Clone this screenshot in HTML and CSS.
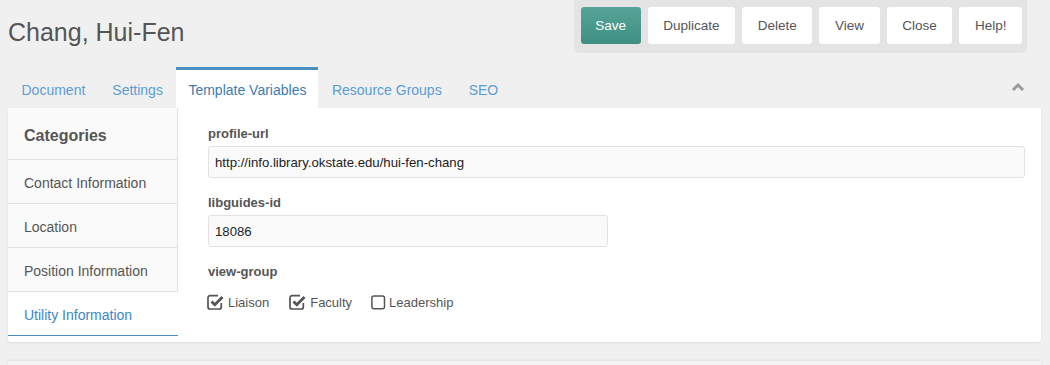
FILE: index.html
```html
<!DOCTYPE html>
<html lang="en">
<head>
  <meta charset="UTF-8">
  <title>Chang, Hui-Fen</title>
  <link rel="stylesheet" href="styles.css">
</head>
<body>
<div class="header">
  <h1 class="page-title">Chang, Hui-Fen</h1>
  <div class="action-bar">
    <button class="btn btn-primary">Save</button>
    <button class="btn">Duplicate</button>
    <button class="btn">Delete</button>
    <button class="btn">View</button>
    <button class="btn">Close</button>
    <button class="btn">Help!</button>
  </div>
</div>

<div class="tabs">
  <div class="tab">Document</div>
  <div class="tab">Settings</div>
  <div class="tab active">Template Variables</div>
  <div class="tab">Resource Groups</div>
  <div class="tab">SEO</div>
  <div class="tab-toggle">
    <svg width="14" height="10" viewBox="0 0 14 10"><polyline points="2,8 7,3 12,8" fill="none" stroke="#999" stroke-width="3"/></svg>
  </div>
</div>

<div class="panel">
  <div class="categories">
    <div class="cat-head">Categories</div>
    <div class="cat">Contact Information</div>
    <div class="cat">Location</div>
    <div class="cat">Position Information</div>
    <div class="cat active">Utility Information</div>
  </div>

  <div class="fields">
    <div class="field">
      <label class="field-label">profile-url</label>
      <div class="input">http://info.library.okstate.edu/hui-fen-chang</div>
    </div>
    <div class="field">
      <label class="field-label">libguides-id</label>
      <div class="input input-short">18086</div>
    </div>
    <div class="field">
      <label class="field-label">view-group</label>
      <div class="checks">
        <span class="check">
          <svg width="19" height="17" viewBox="0 0 19 17"><path d="M15.3 9v4a2 2 0 0 1-2 2h-9.3a2 2 0 0 1-2-2v-9.3a2 2 0 0 1 2-2h8" fill="none" stroke="#555" stroke-width="1.7"/><polyline points="5.5,7.5 8.8,10.8 16.5,3" fill="none" stroke="#555" stroke-width="2.8"/></svg>
          Liaison
        </span>
        <span class="check">
          <svg width="19" height="17" viewBox="0 0 19 17"><path d="M15.3 9v4a2 2 0 0 1-2 2h-9.3a2 2 0 0 1-2-2v-9.3a2 2 0 0 1 2-2h8" fill="none" stroke="#555" stroke-width="1.7"/><polyline points="5.5,7.5 8.8,10.8 16.5,3" fill="none" stroke="#555" stroke-width="2.8"/></svg>
          Faculty
        </span>
        <span class="check">
          <svg width="15" height="17" viewBox="0 0 15 17"><rect x="0.9" y="2.1" width="12.6" height="12.6" rx="2" fill="none" stroke="#555" stroke-width="1.5"/></svg>
          Leadership
        </span>
      </div>
    </div>
  </div>
</div>

<div class="panel-next"></div>
</body>
</html>
```

FILE: styles.css
```css
body {
  margin: 0;
  background-color: #f0f0f0;
  font-family: "Liberation Sans", Arial, sans-serif;
  color: #555;
  overflow: hidden;
}

.header {
  display: flex;
  justify-content: space-between;
  align-items: flex-start;
  padding: 0 23px 0 8px;
}

.page-title {
  margin: 18px 0 0;
  font-size: 25px;
  font-weight: normal;
  color: #555;
}

.action-bar {
  display: flex;
  gap: 7px;
  padding: 7px 5px 9px 7px;
  background-color: #e4e4e4;
  border-radius: 0 0 5px 5px;
}

.btn {
  height: 37px;
  padding: 0 15.6px;
  border: none;
  border-radius: 3px;
  background-color: #fff;
  color: #555;
  font-family: inherit;
  font-size: 13.5px;
}

.btn-primary {
  padding: 0 14.6px;
  background: linear-gradient(#56a598, #3f8e82);
  color: #fff;
}

.tabs {
  display: flex;
  align-items: flex-end;
  margin: 14px 9px 0 8px;
  height: 41px;
}

.tab {
  padding: 0 13.5px;
  height: 38px;
  line-height: 41px;
  font-size: 14px;
  color: #5a9dd2;
}

.tab.active {
  background-color: #fff;
  border-top: 3px solid #4a8fc1;
  color: #3e7db0;
  padding: 0 12px;
}

.tab-toggle {
  margin-left: auto;
  align-self: center;
  margin-right: 16px;
  margin-top: -2px;
}

.panel {
  display: flex;
  margin: 0 9px 0 8px;
  background-color: #fff;
  border-radius: 0 0 3px 3px;
  box-shadow: 0 1px 2px rgba(0, 0, 0, 0.08);
}

.categories {
  width: 169px;
  flex-shrink: 0;
  align-self: flex-start;
  margin-bottom: 6px;
  background-color: #fafafa;
  border-right: 1px solid #e2e2e2;
}

.cat-head {
  height: 51px;
  line-height: 55px;
  padding-left: 16px;
  font-size: 16px;
  font-weight: bold;
  border-bottom: 1px solid #e2e2e2;
}

.cat {
  height: 43px;
  line-height: 46px;
  padding-left: 16px;
  font-size: 14px;
  border-bottom: 1px solid #e2e2e2;
}

.cat.active {
  background-color: #fff;
  color: #3e86c0;
  border-bottom-color: #4a8fc1;
  margin-right: -1px;
}

.fields {
  flex: 1;
  padding: 16px 16px 0 30px;
}

.field {
  margin-bottom: 15px;
}

.field-label {
  display: block;
  line-height: 20px;
  margin-bottom: 2px;
  font-size: 13px;
  font-weight: bold;
}

.input {
  height: 30px;
  line-height: 31px;
  padding: 0 6px;
  background-color: #fafafa;
  border: 1px solid #e2e2e2;
  border-radius: 3px;
  font-size: 13.2px;
  color: #222;
}

.input-short {
  width: 386px;
}

.checks {
  display: flex;
  margin: 12px 0 0 -2px;
  font-size: 13px;
}

.check {
  display: flex;
  align-items: center;
  gap: 3px;
  margin-right: 19px;
}

.panel-next {
  height: 20px;
  margin: 19px 9px 0 8px;
  background-color: #f4f4f4;
  box-shadow: 0 -1px 2px rgba(0, 0, 0, 0.08);
}
```
